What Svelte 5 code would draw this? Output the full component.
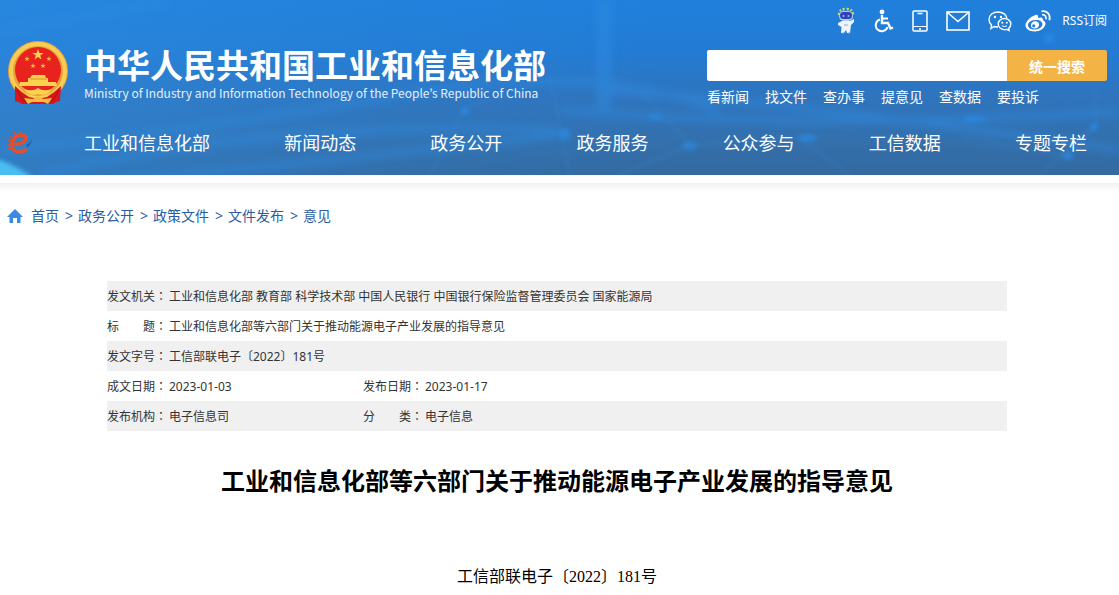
<script lang="ts">
    const navItems = ['工业和信息化部', '新闻动态', '政务公开', '政务服务', '公众参与', '工信数据', '专题专栏'];
    const quickLinks = ['看新闻', '找文件', '查办事', '提意见', '查数据', '要投诉'];
    const crumbs = ['首页', '政务公开', '政策文件', '文件发布', '意见'];

    const rows = [
        [['发文机关', '工业和信息化部 教育部 科学技术部 中国人民银行 中国银行保险监督管理委员会 国家能源局']],
        [['标　　题', '工业和信息化部等六部门关于推动能源电子产业发展的指导意见']],
        [['发文字号', '工信部联电子〔2022〕181号']],
        [['成文日期', '2023-01-03'], ['发布日期', '2023-01-17']],
        [['发布机构', '电子信息司'], ['分　　类', '电子信息']]
    ];

    let keyword = $state('');
</script>

<header>
    <svg class="backdrop" viewBox="0 0 1119 175" preserveAspectRatio="none" aria-hidden="true">
        <defs>
            <linearGradient id="sky" x1="0" y1="0" x2="0" y2="1">
                <stop offset="0" stop-color="#1f80dc" />
                <stop offset="0.3" stop-color="#237bd3" />
                <stop offset="0.55" stop-color="#2f74bd" />
                <stop offset="0.8" stop-color="#3370ad" />
                <stop offset="1" stop-color="#34699f" />
            </linearGradient>
            <linearGradient id="side" x1="0" y1="0" x2="1" y2="0">
                <stop offset="0" stop-color="#2f8de2" stop-opacity="0.5" />
                <stop offset="0.35" stop-color="#2f8de2" stop-opacity="0.15" />
                <stop offset="0.6" stop-color="#2f8de2" stop-opacity="0" />
            </linearGradient>
            <filter id="soft" x="-20%" y="-50%" width="140%" height="200%">
                <feGaussianBlur stdDeviation="4" />
            </filter>
            <filter id="glow" x="-50%" y="-50%" width="200%" height="200%">
                <feGaussianBlur stdDeviation="2" />
            </filter>
        </defs>
        <rect width="1119" height="175" fill="url(#sky)" />
        <rect width="1119" height="175" fill="url(#side)" />
        <g fill="none" stroke="#2f8ae0" stroke-width="6" opacity="0.6" filter="url(#soft)">
            <path d="M0 30 L170 2" />
            <path d="M0 150 Q200 130 400 95 T720 112" />
            <path d="M40 175 Q260 120 560 130" />
            <path d="M120 180 Q300 165 560 135" />
            <path d="M560 110 Q800 130 1119 112" />
            <path d="M600 90 Q780 100 1119 150" />
            <path d="M604 0 V108" stroke-width="14" />
        </g>
        <g fill="none" stroke="#3b86cc" stroke-width="2" opacity="0.4" filter="url(#glow)">
            <path d="M430 175 L465 108 L550 80 L570 175" />
            <path d="M640 90 L690 145 L620 175 M690 145 L800 138 L850 175" />
            <path d="M1095 85 V126 L1068 156 L960 138 M1040 175 L1095 126" />
        </g>
        <g fill="#2b8eeb" opacity="0.6" filter="url(#glow)">
            <circle cx="465" cy="111" r="4" />
            <circle cx="565" cy="134" r="6" />
            <ellipse cx="690" cy="146" rx="8" ry="4" />
            <ellipse cx="655" cy="117" rx="7" ry="3" />
            <ellipse cx="808" cy="138" rx="10" ry="4" />
            <ellipse cx="974" cy="119" rx="12" ry="3" />
            <circle cx="1094" cy="127" r="4" />
            <ellipse cx="1068" cy="156" rx="6" ry="4" />
            <circle cx="1049" cy="38" r="5" />
        </g>
        <path d="M-6 158 Q14 164 34 178 L-6 180 Z" fill="#48bdf2" filter="url(#glow)" />
    </svg>

    <div class="inner">
        <div class="top">
            <a class="brand" href="#home">
                <svg class="emblem" width="62" height="65" viewBox="0 0 62 65" aria-hidden="true">
                    <circle cx="31" cy="31" r="30" fill="#e6a236" />
                    <circle cx="31" cy="31" r="27" fill="none" stroke="#f8cd55" stroke-width="4" />
                    <circle cx="31" cy="30" r="23" fill="#e8231f" />
                    <path d="M31 9 l1.4 4 h4.2 l-3.4 2.5 1.3 4 -3.5 -2.4 -3.5 2.4 1.3 -4 -3.4 -2.5 h4.2 z" fill="#fcd34b" />
                    <g fill="#f5b53c">
                        <path d="M20 16 l.7 2 h2 l-1.6 1.2 .6 2 -1.7 -1.2 -1.7 1.2 .6 -2 -1.6 -1.2 h2 z" />
                        <path d="M42 16 l.7 2 h2 l-1.6 1.2 .6 2 -1.7 -1.2 -1.7 1.2 .6 -2 -1.6 -1.2 h2 z" />
                        <path d="M26 23 l.7 2 h2 l-1.6 1.2 .6 2 -1.7 -1.2 -1.7 1.2 .6 -2 -1.6 -1.2 h2 z" />
                        <path d="M36 23 l.7 2 h2 l-1.6 1.2 .6 2 -1.7 -1.2 -1.7 1.2 .6 -2 -1.6 -1.2 h2 z" />
                    </g>
                    <path d="M25 35 H38 L39 38 H41 V42 H49 L50 46 H12 L13 42 H21 V38 H23 Z" fill="#fbd24d" />
                    <path d="M23 39 H40" stroke="#dd8d24" />
                    <path d="M8 46 Q14 52 22 57 L31 59 L40 57 Q48 52 54 46 L53 61 Q48 62 46 64 L15 64 Q13 62 8 61 Z" fill="#d9161c" />
                    <path d="M17 49 Q26 52 31 48 Q36 52 45 49 Q40 57 31 54 Q22 57 17 49 Z" fill="#fbd24d" />
                    <path d="M17 58 L26 59 Q31 54 36 59 L45 58 L41 64 L37 62 H25 L21 64 Z" fill="#f2bd3e" />
                    <path d="M10 50 Q13 56 18 62 M52 50 Q49 56 44 62" stroke="#a80f14" fill="none" />
                </svg>
                <span class="names">
                    <span class="name-zh">中华人民共和国工业和信息化部</span>
                    <span class="name-en" lang="en">Ministry of Industry and Information Technology of the People’s Republic of China</span>
                </span>
            </a>

            <div class="tools">
                <div class="icons">
                    <a href="#robot" aria-label="智能机器人">
                        <svg width="20" height="28" viewBox="0 0 20 28">
                            <path d="M3 8 Q3 2 10 2 Q17 2 17 8" fill="none" stroke="#c5d868" stroke-width="2.5" stroke-dasharray="2 1.6" />
                            <rect x="3" y="4" width="14" height="10" rx="5" fill="#b9cdf0" />
                            <rect x="4" y="5" width="12" height="7" rx="3.5" fill="#3340b8" />
                            <circle cx="7.5" cy="9" r="1" fill="#74c8ff" />
                            <circle cx="12.5" cy="9" r="1" fill="#74c8ff" />
                            <path d="M6 14 H14 L18 12 L18 15 L15 18 L14 26 H11 L10 23 L8 26 H5 L5.5 20 L2 18 V16 Z" fill="#eef4fc" />
                            <path d="M8 18 H12 M6 26 H8 M12 26 H14" stroke="#93a9cf" />
                        </svg>
                    </a>
                    <a href="#accessible" aria-label="无障碍">
                        <svg width="20" height="24" viewBox="0 0 20 24" fill="none" stroke="#fff" stroke-width="2">
                            <circle cx="8" cy="3" r="2.4" fill="#fff" stroke="none" />
                            <path d="M8 6 V14 H14 L16.5 19.5 L19 18.5" stroke-width="2.4" />
                            <path d="M8 9.5 H14" />
                            <path d="M6 10.5 A6 6 0 1 0 13.5 18" />
                        </svg>
                    </a>
                    <a href="#mobile" aria-label="手机版">
                        <svg width="16" height="22" viewBox="0 0 16 22" fill="none" stroke="#fff">
                            <rect x="1" y="1" width="14" height="20" rx="1" stroke-width="1.5" />
                            <path d="M1 16.5 H15" />
                            <path d="M5.5 3.5 H10.5 M7 19 H9" stroke-width="1.5" />
                        </svg>
                    </a>
                    <a href="#mail" aria-label="邮箱">
                        <svg width="24" height="20" viewBox="0 0 24 20" fill="none" stroke="#fff" stroke-width="1.6">
                            <rect x="1" y="1" width="22" height="18" />
                            <path d="M1.5 1.5 L12 10.5 L22.5 1.5" />
                        </svg>
                    </a>
                    <a href="#wechat" aria-label="微信">
                        <svg width="24" height="22" viewBox="0 0 24 22" fill="none" stroke="#fff" stroke-width="1.4">
                            <path d="M10 17 Q8 17 6 16.5 L3 18.5 L3.5 15 Q1 12.5 1 9.5 C1 5 5 2 10 2 C14.5 2 18.3 4.5 18.8 8" />
                            <path d="M16.5 8.5 C20 8.5 22.8 11 22.8 14 C22.8 15.8 22 17.3 20.8 18.3 L21 20.5 L19 19.3 Q18 19.7 16.5 19.7 C13 19.7 10.2 17.2 10.2 14 C10.2 11 13 8.5 16.5 8.5 Z" />
                            <g fill="#fff" stroke="none">
                                <circle cx="7" cy="7" r="1.2" />
                                <circle cx="13" cy="7" r="1.2" />
                                <circle cx="14.3" cy="12.8" r="1" />
                                <circle cx="18.8" cy="12.8" r="1" />
                            </g>
                            <path d="M14 15.8 Q16.5 17.5 19 15.8" stroke-width="1" />
                        </svg>
                    </a>
                    <a class="weibo" href="#weibo" aria-label="微博">
                        <svg width="26" height="22" viewBox="0 0 26 22" fill="none" stroke="#fff">
                            <path fill="#fff" fill-rule="evenodd" stroke="none" d="M10.5 5 C12.5 4.3 13.5 5.5 13 8 C16 6.8 18.5 7.5 17.8 10.2 C20 11 21 12.5 20.3 14.8 C19.3 18.5 15 21.5 9.8 21.5 C4.5 21.5 .5 19 .5 15.3 C.5 11.5 6 6.3 10.5 5 Z M10 10 C5.8 10.3 2.8 12.7 3 15.5 C3.2 18.2 6.4 19.8 10.6 19.4 C14.8 19 17.6 16.6 17.4 13.9 C17.2 11.2 14 9.6 10 10 Z" />
                            <path fill="#fff" fill-rule="evenodd" stroke="none" d="M10 11.2 C12.8 11.2 14.5 13 14 15.3 C13.5 17.6 11.5 18.8 9.3 18.6 C7 18.4 5.6 16.8 6 14.7 C6.4 12.6 8 11.2 10 11.2 Z M8.7 14.2 A1.6 1.6 0 1 0 8.7 17.4 A1.6 1.6 0 1 0 8.7 14.2 Z" />
                            <path d="M17 4.8 Q21.5 4.5 21 9.3" stroke-width="1.6" />
                            <path d="M16.5 1.4 Q20.5 .5 23 3.2 Q25.5 6 24.3 10.3" stroke-width="1.8" />
                        </svg>
                    </a>
                    <a class="rss" href="#rss">RSS订阅</a>
                </div>
                <form class="search" onsubmit={(e) => e.preventDefault()}>
                    <input type="text" aria-label="搜索关键词" bind:value={keyword} />
                    <button type="submit">统一搜索</button>
                </form>
                <div class="quick">
                    {#each quickLinks as link}
                        <a href="#quick">{link}</a>
                    {/each}
                </div>
            </div>
        </div>

        <nav>
            <a class="e-logo" href="#egov" aria-label="政务网">
                <svg width="26" height="24" viewBox="0 0 26 24" fill="none">
                    <path d="M7 13 Q15 14 19 8 Q20 4 14 4 Q6 5 5 13 Q5 21 13 21 Q17 21 20 18" stroke="#e14f2d" stroke-width="3.5" />
                    <path d="M1 9 L5 10 M0 13 L4 14 M3 5 L6 7 M7 1 L9 4 M13 0 L13 3 M1 18 L5 17" stroke="#e14f2d" stroke-width="1.5" />
                    <path d="M20 13 Q24 12 25 7 Q25 14 19 17" fill="#1b62b3" />
                </svg>
            </a>
            <div class="menu">
                {#each navItems as item}
                    <a href="#nav">{item}</a>
                {/each}
            </div>
        </nav>
    </div>
</header>

<main>
    <div class="crumbs">
        <svg width="16" height="14" viewBox="0 0 16 14" aria-hidden="true">
            <path d="M8 0 L16 8 H13.5 V14 H10 V9 H6 V14 H2.5 V8 H0 Z" fill="#3b8be6" />
        </svg>
        {#each crumbs as crumb, i}
            {#if i > 0}<span class="sep">&gt;</span>{/if}
            <a href="#crumb">{crumb}</a>
        {/each}
    </div>

    <article>
        <table>
            <colgroup>
                <col class="label-col" />
                <col class="value-col" />
                <col class="label-col" />
                <col />
            </colgroup>
            <tbody>
                {#each rows as cells}
                    <tr>
                        {#each cells as [label, value]}
                            <th scope="row">{label}<span class="colon">：</span></th>
                            <td colspan={cells.length === 1 ? 3 : 1}>{value}</td>
                        {/each}
                    </tr>
                {/each}
            </tbody>
        </table>

        <h1>工业和信息化部等六部门关于推动能源电子产业发展的指导意见</h1>
        <p class="doc-number">工信部联电子〔2022〕181号</p>
    </article>
</main>

<style>
    :global(body) {
        margin: 0;
        background: #fff;
        font-family: "Noto Sans", "Noto Sans CJK SC", sans-serif;
    }

    a {
        color: inherit;
        text-decoration: none;
    }

    header {
        position: relative;
        color: #fff;
        overflow: hidden;
    }

    .backdrop {
        position: absolute;
        top: 0;
        left: 0;
        width: 100%;
        height: 100%;
    }

    .inner {
        position: relative;
        padding: 0 12px 2px 7px;
    }

    .top {
        display: flex;
        justify-content: space-between;
    }

    .brand {
        display: flex;
        gap: 15px;
        padding-top: 40px;
    }

    .names {
        display: flex;
        flex-direction: column;
        padding-top: 4px;
        white-space: nowrap;
    }

    .name-zh {
        font-family: "Noto Sans CJK SC", sans-serif;
        font-size: 33px;
        font-weight: bold;
        line-height: 40px;
    }

    .name-en {
        font-family: "Noto Sans CJK KR", sans-serif;
        font-size: 12px;
        line-height: 18px;
        color: #e3effb;
    }

    .tools {
        width: 400px;
    }

    .icons {
        display: flex;
        justify-content: flex-end;
        align-items: center;
        gap: 18px;
        height: 42px;
        margin-bottom: 8px;
    }

    .icons a {
        display: flex;
    }

    .icons .weibo {
        margin-left: -5px;
    }

    .icons .rss {
        margin-left: -7px;
        font-size: 12px;
        line-height: 20px;
    }

    .search {
        display: flex;
        height: 31px;
    }

    .search input {
        flex: 1;
        min-width: 0;
        border: none;
        border-radius: 2px 0 0 2px;
        padding: 0 8px;
        background: #fff;
        font-size: 14px;
        outline: none;
    }

    .search button {
        width: 100px;
        padding: 0;
        border: none;
        border-radius: 0 2px 2px 0;
        background: #f3b445;
        color: #fff;
        font-family: inherit;
        font-size: 14px;
        font-weight: bold;
        cursor: pointer;
    }

    .quick {
        display: flex;
        gap: 16px;
        font-size: 14px;
        line-height: 32px;
    }

    nav {
        display: flex;
        align-items: center;
        height: 60px;
    }

    .e-logo {
        display: flex;
        width: 77px;
    }

    .menu {
        flex: 1;
        display: flex;
        justify-content: space-between;
        padding-right: 20px;
        font-size: 18px;
        line-height: 60px;
    }

    main {
        margin-top: 8px;
        padding: 18px 12px 0 7px;
        background: linear-gradient(#eef0f3, #fff 8px);
    }

    .crumbs {
        display: flex;
        align-items: center;
        color: #2a5c9f;
        font-size: 14px;
        line-height: 30px;
    }

    .crumbs svg {
        margin-right: 8px;
    }

    .sep {
        padding: 0 5px 0 6px;
    }

    article {
        max-width: 900px;
        margin: 50px auto 0;
    }

    table {
        width: 100%;
        table-layout: fixed;
        border-collapse: collapse;
        color: #333;
        font-size: 12px;
        line-height: 24px;
    }

    .label-col {
        width: 62px;
    }

    .value-col {
        width: 194px;
    }

    tr:nth-child(odd) {
        background: #f0f0f0;
    }

    th,
    td {
        box-sizing: border-box;
        height: 30px;
        padding: 3px 0 0;
        font-weight: normal;
        text-align: left;
        vertical-align: baseline;
        white-space: nowrap;
    }

    .colon {
        font-family: "Noto Sans CJK TC", sans-serif;
    }

    h1 {
        margin: 32px 0 0;
        color: #000;
        font-size: 24px;
        font-weight: bold;
        line-height: 36px;
        text-align: center;
    }

    .doc-number {
        margin: 66px 0 0;
        color: #000;
        font-family: "Liberation Serif", "Noto Sans CJK SC", serif;
        font-size: 16px;
        line-height: 24px;
        text-align: center;
    }
</style>
